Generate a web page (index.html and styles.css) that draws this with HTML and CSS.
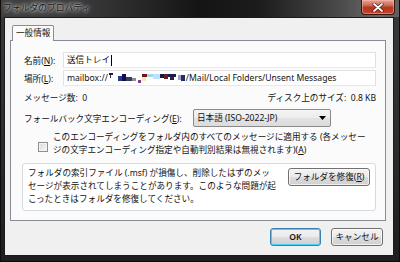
FILE: index.html
```html
<!DOCTYPE html>
<html lang="ja">
<head>
<meta charset="utf-8">
<title>フォルダのプロパティ</title>
<link rel="stylesheet" href="styles.css">
</head>
<body>
<div class="window">
  <div class="titlebar">
    <span class="title">フォルダのプロパティ</span>
    <div class="close">
      <svg width="12" height="9" viewBox="0 0 12 9"><path d="M2 1 L10 8 M10 1 L2 8" stroke="#3a1008" stroke-width="3" stroke-linecap="round"/><path d="M2 1 L10 8 M10 1 L2 8" stroke="#fff" stroke-width="1.8" stroke-linecap="round"/></svg>
    </div>
  </div>
  <div class="client">
    <div class="tabs"><div class="tab">一般情報</div></div>
    <div class="panel">
      <div class="field">
        <span class="label">名前(<u>N</u>):</span>
        <div class="input">送信トレイ<span class="caret"></span></div>
      </div>
      <div class="field">
        <span class="label">場所(<u>L</u>):</span>
        <div class="input">mailbox://<svg class="redact" width="78" height="10" viewBox="0 0 78 10"><rect x="1" y="0" width="4" height="2" fill="#1a1a5a"/><rect x="2" y="2" width="1" height="3" fill="#333"/><rect x="10" y="3" width="4" height="5" fill="#2a3a8a"/><rect x="14" y="1" width="4" height="7" fill="#101050"/><rect x="18" y="4" width="6" height="4" fill="#3a3a6a"/><rect x="24" y="5" width="4" height="3" fill="#8a8a9a"/><rect x="30" y="7" width="3" height="3" fill="#8a3a8a"/><rect x="34" y="1" width="5" height="3" fill="#6a1a1a"/><rect x="34" y="4" width="4" height="4" fill="#f7e8b0"/><rect x="39" y="1" width="6" height="3" fill="#a0d8f0"/><rect x="45" y="1" width="7" height="5" fill="#b8e4ff"/><rect x="52" y="1" width="5" height="4" fill="#1a1a3a"/><rect x="56" y="1" width="4" height="5" fill="#6a1a2a"/><rect x="60" y="1" width="8" height="3" fill="#102050"/><rect x="62" y="4" width="4" height="3" fill="#402030"/><rect x="70" y="2" width="3" height="5" fill="#a0a0c0"/><rect x="73" y="2" width="4" height="6" fill="#2a2a6a"/></svg>/Mail/Local Folders/Unsent Messages</div>
      </div>
      <div class="counts">
        <span>メッセージ数: &nbsp;0</span>
        <span>ディスク上のサイズ: &nbsp;0.8 KB</span>
      </div>
      <div class="fallback">
        <span class="flabel">フォールバック文字エンコーディング(<u>E</u>):</span>
        <div class="select">日本語 (ISO-2022-JP)<svg class="arrow" width="7" height="4" viewBox="0 0 7 4"><path d="M0 0 H7 L3.5 4 Z" fill="#000"/></svg></div>
      </div>
      <div class="check">
        <span class="box"></span>
        <div class="checktext">このエンコーディングをフォルダ内のすべてのメッセージに適用する (各メッセー<br>ジの文字エンコーディング指定や自動判別結果は無視されます)(<u>A</u>)</div>
      </div>
      <div class="info">
        <p class="infotext">フォルダの索引ファイル (.msf) が損傷し、削除したはずのメッ<br>セージが表示されてしまうことがあります。このような問題が起<br>こったときはフォルダを修復してください。</p>
        <button class="btn repair">フォルダを修復(<u>R</u>)</button>
      </div>
    </div>
    <div class="buttons">
      <button class="btn ok">OK</button>
      <button class="btn cancel">キャンセル</button>
    </div>
  </div>
</div>
</body>
</html>
```

FILE: styles.css
```css
* { box-sizing: border-box; }
html, body { margin: 0; padding: 0; }
body {
  width: 400px;
  height: 262px;
  overflow: hidden;
  font-family: "Noto Sans", "Noto Sans CJK JP", sans-serif;
  font-size: 8.6px;
  color: #111;
  background: #222;
}
.window {
  width: 400px;
  height: 262px;
  display: flex;
  flex-direction: column;
  background: linear-gradient(to bottom, #3a3a3a, #2a2a2a 60%, #1e1e1e);
  border: 1px solid #0c0c0c;
  border-top: none;
}
.titlebar {
  height: 17px;
  flex: none;
  display: flex;
  align-items: flex-start;
  background: linear-gradient(to right, #3e3e3e 0%, #343434 25%, #141414 50%, #1c1c1c 65%, #4a4a4a 85%, #6a6a6a 95%, #5e5e5e 100%);
}
.title {
  margin: 3px 0 0 2px;
  font-size: 8.8px;
  line-height: 11px;
  color: #141414;
  text-shadow: 0 0 2px #dcdcdc, 0 0 4px #c8c8c8, 0 0 7px #9a9a9a, 0 0 10px #8a8a8a;
}
.close {
  margin-left: auto;
  margin-right: 4px;
  width: 34px;
  height: 15px;
  display: flex;
  align-items: center;
  justify-content: center;
  border: 1px solid #3a1510;
  border-top: none;
  border-radius: 0 0 4px 4px;
  background: linear-gradient(to bottom, #e6a394 0%, #d0705e 35%, #b4361e 55%, #c4442a 100%);
  box-shadow: inset 0 0 0 1px rgba(255, 200, 190, 0.45);
}
.client {
  flex: 1;
  margin: 0 5px 5px 3px;
  background: #f0f0f0;
  border: 1px solid #1a1a1a;
  padding: 7px 7px 0 5px;
  display: flex;
  flex-direction: column;
}
.tabs {
  height: 16px;
  display: flex;
  padding-left: 2px;
  margin-bottom: -1px;
}
.tab {
  position: relative;
  z-index: 1;
  height: 16px;
  padding: 0 3px;
  line-height: 15px;
  background: #fbfbfb;
  border: 1px solid #898c95;
  border-bottom: none;
  border-radius: 2px 2px 0 0;
}
.panel {
  height: 181px;
  background: #fbfbfb;
  border: 1px solid #898c95;
  padding: 11px 9px 0 12px;
  display: flex;
  flex-direction: column;
}
.field {
  height: 16px;
  display: flex;
  align-items: center;
  margin-bottom: 2px;
}
.label {
  width: 40px;
  padding-left: 1px;
  flex: none;
}
.input {
  flex: 1;
  height: 16px;
  border: 1px solid #abadb3;
  border-top-color: #e3e3e3;
  border-left-color: #e2e3ea;
  border-right-color: #dbdfe6;
  border-bottom-color: #e3e9ef;
  background: #fff;
  padding: 0 3px;
  line-height: 14px;
  display: flex;
  align-items: center;
  white-space: nowrap;
  overflow: hidden;
}
.caret {
  display: inline-block;
  width: 1px;
  height: 11px;
  background: #000;
  margin-left: 1px;
}
.redact { flex: none; display: block; }
.counts {
  margin-top: 4px;
  height: 13px;
  line-height: 13px;
  display: flex;
  justify-content: space-between;
  padding-left: 1px;
}
.fallback {
  margin-top: 4px;
  display: flex;
  align-items: center;
  height: 18px;
}
.flabel {
  width: 170px;
  flex: none;
  padding-left: 1px;
}
.select {
  width: 138px;
  height: 18px;
  border: 1px solid #8a8a8a;
  border-radius: 2px;
  background: linear-gradient(to bottom, #f4f4f4, #ececec 50%, #e2e2e2 50%, #dcdcdc);
  padding: 0 4px 0 3px;
  display: flex;
  align-items: center;
  justify-content: space-between;
  line-height: 16px;
}
.arrow { display: block; }
.check {
  margin-top: 4px;
  display: flex;
  align-items: flex-start;
  padding-left: 15px;
}
.box {
  flex: none;
  width: 10px;
  height: 10px;
  margin-top: 11px;
  border: 1px solid #8e8f8f;
  background: linear-gradient(135deg, #dcdcdc, #f6f6f6);
  box-shadow: inset 0 0 0 1px #f4f4f4;
}
.checktext {
  margin-left: 5px;
  line-height: 13px;
  white-space: nowrap;
}
.info {
  margin-top: 6px;
  margin-left: -1px;
  height: 48px;
  border: 1px solid #d5dbe2;
  border-radius: 3px;
  background: #fff;
  display: flex;
  align-items: flex-start;
}
.infotext {
  flex: 1;
  margin: 0;
  padding: 3px 0 0 5px;
  line-height: 13px;
  white-space: nowrap;
}
.btn {
  font: inherit;
  color: #111;
  height: 18px;
  padding: 0;
  border: 1px solid #707070;
  border-radius: 3px;
  background: linear-gradient(to bottom, #f2f2f2 0%, #ebebeb 48%, #dddddd 52%, #cfcfcf 100%);
  box-shadow: inset 0 0 0 1px rgba(255, 255, 255, 0.7);
  line-height: 16px;
}
.repair {
  width: 82px;
  margin: 4px 5px 0 0;
  flex: none;
}
.buttons {
  margin-top: 7px;
  display: flex;
  justify-content: flex-end;
  gap: 10px;
  padding-right: 3px;
}
.ok {
  width: 51px;
  border-color: #3c7fb1;
  box-shadow: inset 0 0 0 1px #48d0f8;
  font-weight: 600;
}
.cancel { width: 52px; }
u { text-decoration: underline; text-underline-offset: 1px; }
```
